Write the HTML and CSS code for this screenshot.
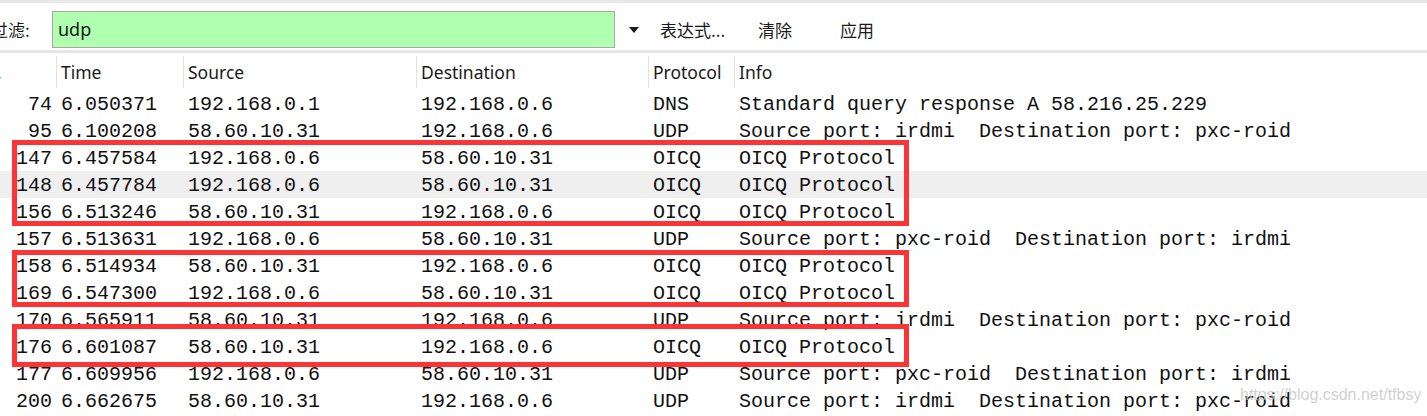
FILE: index.html
```html
<!DOCTYPE html>
<html lang="zh">
<head>
<meta charset="utf-8">
<title>Wireshark - udp</title>
<link rel="stylesheet" href="styles.css">
</head>
<body>
<div class="app">
  <div class="toolbar">
    <span class="label">过滤:</span>
    <div class="filter">udp</div>
    <span class="arrow"></span>
    <span class="btn btn-expr">表达式...</span>
    <span class="btn btn-clear">清除</span>
    <span class="btn btn-apply">应用</span>
  </div>
  <div class="list">
    <div class="row head">
      <div class="c no">No.</div>
      <div class="c">Time</div>
      <div class="c">Source</div>
      <div class="c">Destination</div>
      <div class="c">Protocol</div>
      <div class="c">Info</div>
    </div>
    <div class="row"><div class="c no">74</div><div class="c">6.050371</div><div class="c">192.168.0.1</div><div class="c">192.168.0.6</div><div class="c">DNS</div><div class="c">Standard query response A 58.216.25.229</div></div>
    <div class="row"><div class="c no">95</div><div class="c">6.100208</div><div class="c">58.60.10.31</div><div class="c">192.168.0.6</div><div class="c">UDP</div><div class="c">Source port: irdmi  Destination port: pxc-roid</div></div>
    <div class="row"><div class="c no">147</div><div class="c">6.457584</div><div class="c">192.168.0.6</div><div class="c">58.60.10.31</div><div class="c">OICQ</div><div class="c">OICQ Protocol</div></div>
    <div class="row sel"><div class="c no">148</div><div class="c">6.457784</div><div class="c">192.168.0.6</div><div class="c">58.60.10.31</div><div class="c">OICQ</div><div class="c">OICQ Protocol</div></div>
    <div class="row"><div class="c no">156</div><div class="c">6.513246</div><div class="c">58.60.10.31</div><div class="c">192.168.0.6</div><div class="c">OICQ</div><div class="c">OICQ Protocol</div></div>
    <div class="row"><div class="c no">157</div><div class="c">6.513631</div><div class="c">192.168.0.6</div><div class="c">58.60.10.31</div><div class="c">UDP</div><div class="c">Source port: pxc-roid  Destination port: irdmi</div></div>
    <div class="row"><div class="c no">158</div><div class="c">6.514934</div><div class="c">58.60.10.31</div><div class="c">192.168.0.6</div><div class="c">OICQ</div><div class="c">OICQ Protocol</div></div>
    <div class="row"><div class="c no">169</div><div class="c">6.547300</div><div class="c">192.168.0.6</div><div class="c">58.60.10.31</div><div class="c">OICQ</div><div class="c">OICQ Protocol</div></div>
    <div class="row"><div class="c no">170</div><div class="c">6.565911</div><div class="c">58.60.10.31</div><div class="c">192.168.0.6</div><div class="c">UDP</div><div class="c">Source port: irdmi  Destination port: pxc-roid</div></div>
    <div class="row"><div class="c no">176</div><div class="c">6.601087</div><div class="c">58.60.10.31</div><div class="c">192.168.0.6</div><div class="c">OICQ</div><div class="c">OICQ Protocol</div></div>
    <div class="row"><div class="c no">177</div><div class="c">6.609956</div><div class="c">192.168.0.6</div><div class="c">58.60.10.31</div><div class="c">UDP</div><div class="c">Source port: pxc-roid  Destination port: irdmi</div></div>
    <div class="row"><div class="c no">200</div><div class="c">6.662675</div><div class="c">58.60.10.31</div><div class="c">192.168.0.6</div><div class="c">UDP</div><div class="c">Source port: irdmi  Destination port: pxc-roid</div></div>
  </div>
  <div class="mark box1"></div>
  <div class="mark box2"></div>
  <div class="mark box3"></div>
  <div class="watermark">https://blog.csdn.net/tfbsy</div>
</div>
</body>
</html>
```

FILE: styles.css
```css
html, body {
  margin: 0;
  padding: 0;
  background: #ffffff;
}
.app {
  position: relative;
  width: 1427px;
  height: 416px;
  overflow: hidden;
  font-family: "Noto Sans CJK SC", "Noto Sans", sans-serif;
  color: #1a1a1a;
}
.toolbar {
  height: 41px;
  padding-top: 6px;
  border-top: 3px solid #e8e8e8;
  border-bottom: 3px solid #e6e6e6;
  display: flex;
  align-items: center;
  font-size: 17px;
}
.label {
  margin-left: -9px;
  width: 61px;
}
.filter {
  box-sizing: border-box;
  width: 563px;
  height: 37px;
  border: 1px solid #a8a8a8;
  background: #b0ffb0;
  font-family: "Noto Sans", sans-serif;
  font-size: 18px;
  padding-left: 5px;
  line-height: 34px;
}
.arrow {
  margin-left: 14px;
  width: 0;
  height: 0;
  border-left: 5px solid transparent;
  border-right: 5px solid transparent;
  border-top: 6px solid #1a1a1a;
}
.btn { white-space: nowrap; }
.btn-expr { margin-left: 21px; width: 98px; }
.btn-clear { width: 82px; }

.list {
  font-family: "Liberation Mono", "DejaVu Sans Mono", monospace;
  font-size: 20px;
  color: #111;
}
.row {
  box-sizing: border-box;
  display: grid;
  grid-template-columns: 56px 127px 233px 232px 86px 1fr;
  height: 27px;
  padding-top: 2px;
  align-items: center;
  white-space: pre;
}
.row .c {
  padding-left: 5px;
  overflow: visible;
}
.row .c.no {
  padding-left: 0;
  padding-right: 4px;
  text-align: right;
}
.row.sel { background: #efefef; }
.head {
  height: 37px;
  padding-top: 0;
  font-family: "Noto Sans", sans-serif;
  font-size: 17.5px;
  color: #1a1a1a;
}
.head .c {
  height: 32px;
  line-height: 32px;
  border-left: 1px solid #e2e2e2;
  padding-left: 4px;
}
.head .c.no {
  border-left: 0;
  text-align: left;
  margin-left: -27px;
  padding-right: 0;
  color: #3a6ea5;
}
.mark {
  position: absolute;
  left: 12px;
  width: 887px;
  border: 5px solid #fb3535;
}
.box1 { top: 140px; height: 76px; }
.box2 { top: 250px; height: 47px; }
.box3 { top: 324px; height: 33px; }
.watermark {
  position: absolute;
  left: 1240px;
  top: 386px;
  font-family: "Liberation Sans", sans-serif;
  font-size: 16px;
  color: rgba(200, 200, 200, 0.85);
}
```
